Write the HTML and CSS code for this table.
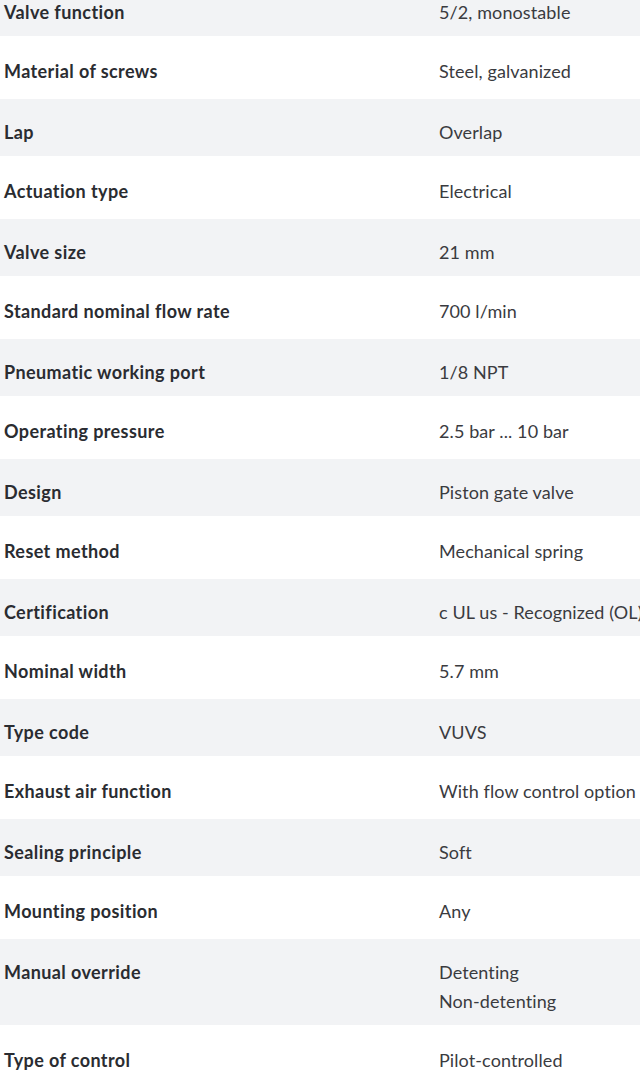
FILE: index.html
```html
<!DOCTYPE html>
<html lang="en">
<head>
<meta charset="utf-8">
<title>Technical data</title>
<link rel="stylesheet" href="styles.css">
</head>
<body>
<div class="specs">
  <div class="row"><div class="label">Valve function</div><div class="value">5/2, monostable</div></div>
  <div class="row"><div class="label">Material of screws</div><div class="value">Steel, galvanized</div></div>
  <div class="row"><div class="label">Lap</div><div class="value">Overlap</div></div>
  <div class="row"><div class="label">Actuation type</div><div class="value">Electrical</div></div>
  <div class="row"><div class="label">Valve size</div><div class="value">21 mm</div></div>
  <div class="row"><div class="label">Standard nominal flow rate</div><div class="value">700 l/min</div></div>
  <div class="row"><div class="label">Pneumatic working port</div><div class="value">1/8 NPT</div></div>
  <div class="row"><div class="label">Operating pressure</div><div class="value">2.5 bar ... 10 bar</div></div>
  <div class="row"><div class="label">Design</div><div class="value">Piston gate valve</div></div>
  <div class="row"><div class="label">Reset method</div><div class="value">Mechanical spring</div></div>
  <div class="row"><div class="label">Certification</div><div class="value">c UL us - Recognized (OL)</div></div>
  <div class="row"><div class="label">Nominal width</div><div class="value">5.7 mm</div></div>
  <div class="row"><div class="label">Type code</div><div class="value">VUVS</div></div>
  <div class="row"><div class="label">Exhaust air function</div><div class="value">With flow control option</div></div>
  <div class="row"><div class="label">Sealing principle</div><div class="value">Soft</div></div>
  <div class="row"><div class="label">Mounting position</div><div class="value">Any</div></div>
  <div class="row"><div class="label">Manual override</div><div class="value">Detenting<br>Non-detenting</div></div>
  <div class="row"><div class="label">Type of control</div><div class="value">Pilot-controlled</div></div>
</div>
</body>
</html>
```
FILE: styles.css
```css
html, body {
  margin: 0;
  padding: 0;
  background: #ffffff;
  overflow: hidden;
}

body {
  font-family: Lato, "Open Sans", "Liberation Sans", sans-serif;
  font-size: 18px;
  line-height: 29px;
  color: #333333;
}

.specs {
  margin-top: -21px;
  display: flex;
  flex-direction: column;
}

.row {
  display: grid;
  grid-template-columns: 435px 1fr;
  padding: 21px 0 13px;
  background: #ffffff;
}

.row:nth-child(odd) {
  background: #f2f3f5;
  padding: 19px 0 9px;
}

.label {
  padding-left: 4px;
  font-weight: 700;
  color: #2a2c31;
  white-space: nowrap;
  letter-spacing: 0.4px;
}

.value {
  padding-left: 4px;
  color: #3a3b3f;
  white-space: nowrap;
  overflow: hidden;
  letter-spacing: 0.1px;
}
```
